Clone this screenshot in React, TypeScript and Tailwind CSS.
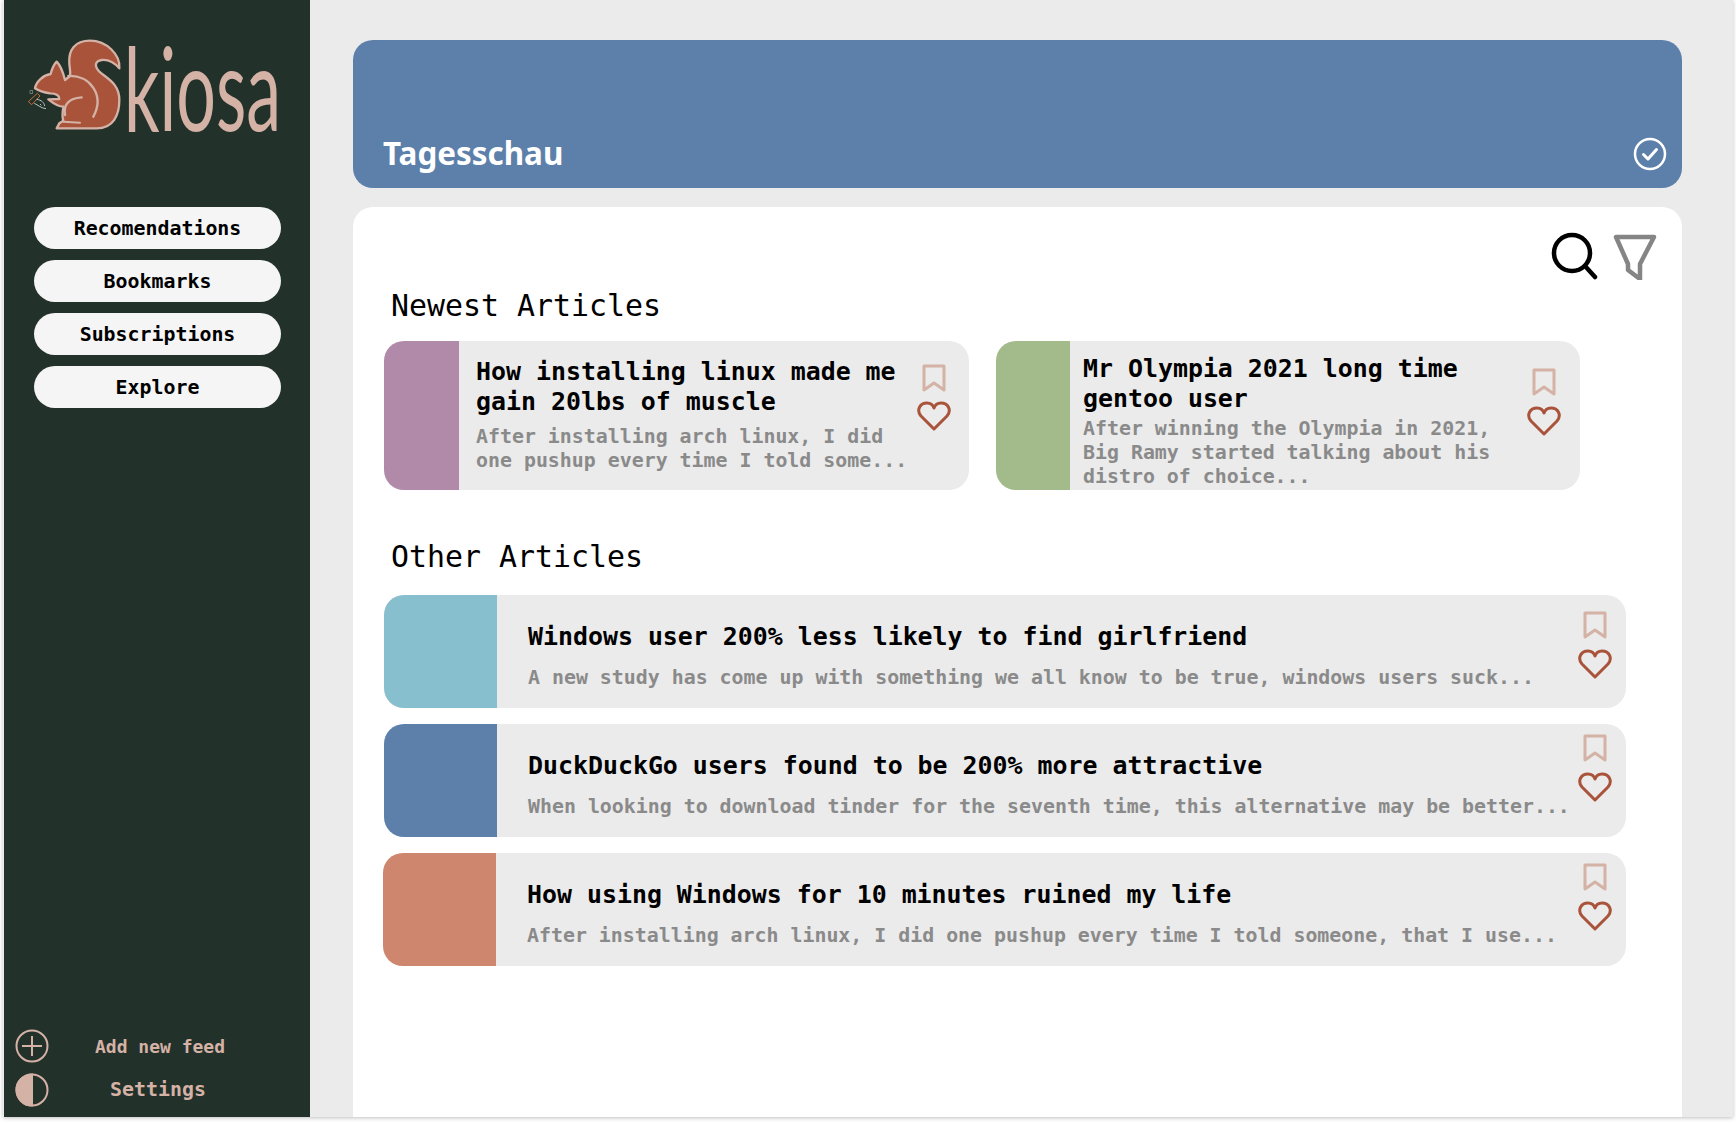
const mono = "font-['DejaVu_Sans_Mono','Liberation_Mono',monospace]";

function Logo() {
  return (
    <svg viewBox="12 0 918 600" className="w-[306px] h-[200px] shrink-0">
      <path
        d="M170 385 L290 385 C340 385 358 345 358 300 C358 250 320 235 298 215 C282 198 285 183 305 180 C325 178 345 190 358 205 C362 165 320 122 270 122 C225 122 205 150 208 190 C209 205 212 218 210 228 L195 240 C190 220 180 195 170 185 C160 195 155 210 152 222 C130 225 108 245 105 265 C120 275 135 278 150 280 C165 280 178 285 178 297 L145 298 C160 310 175 320 190 320 C188 335 185 350 190 362 L178 370 Z"
        fill="#a9533b"
        stroke="#d4b2a5"
        strokeWidth="7"
        strokeLinejoin="round"
      />
      <path d="M205 228 C270 225 315 285 280 350" fill="none" stroke="#d4b2a5" strokeWidth="7" strokeLinecap="round" />
      <path d="M195 345 C190 315 205 295 245 292" fill="none" stroke="#d4b2a5" strokeWidth="7" strokeLinecap="round" />
      <path d="M190 365 L240 368" fill="none" stroke="#d4b2a5" strokeWidth="6" strokeLinecap="round" />
      <path d="M85 305 L112 280 L120 288 L95 314 Z" fill="none" stroke="#c5713a" strokeWidth="3" strokeLinejoin="round" />
      <path d="M110 298 C125 300 132 308 134 318 M103 310 C113 315 125 325 138 326 M120 312 L124 316" fill="none" stroke="#b9c4bc" strokeWidth="3" />
      <rect x="90" y="272" width="8" height="8" fill="none" stroke="#8d9a92" strokeWidth="2" />
      <text
        transform="translate(372 392) scale(0.6 1)"
        fontFamily="Lato, 'Noto Sans', sans-serif"
        fontSize="350"
        fill="#d4b2a5"
      >
        kiosa
      </text>
    </svg>
  );
}

function BookmarkIcon() {
  return (
    <svg width="26" height="30" viewBox="0 0 26 30" fill="none" stroke="#d4b2a5" strokeWidth="3" strokeLinejoin="round">
      <path d="M3 3 H23 V27 L13 20 L3 27 Z" />
    </svg>
  );
}

function HeartIcon() {
  return (
    <svg width="34" height="32" viewBox="0 0 34 32" fill="none" stroke="#a9533b" strokeWidth="3" strokeLinejoin="round">
      <path d="M17 29 L4 16 C-1 10 3 3 10 3 C13 3 16 5 17 8 C18 5 21 3 24 3 C31 3 35 10 30 16 Z" />
    </svg>
  );
}

function NewCard({
  color,
  swatch,
  title,
  desc,
  className,
  textClass,
  descClass,
  iconClass,
}: {
  color: string;
  swatch: string;
  title: string[];
  desc: string[];
  className: string;
  textClass: string;
  descClass: string;
  iconClass: string;
}) {
  return (
    <div className={`flex h-[149px] bg-[#ebebeb] rounded-[20px] overflow-hidden ${className}`}>
      <div className={`${swatch} shrink-0 ${color}`} />
      <div className={`flex-1 min-w-0 ${textClass}`}>
        <div className="text-[24.9px] leading-[30px] font-bold text-black whitespace-nowrap">
          {title.map((t) => (
            <div key={t}>{t}</div>
          ))}
        </div>
        <div className={`text-[19.9px] leading-[24px] font-bold text-[#8a8a8a] whitespace-nowrap ${descClass}`}>
          {desc.map((d) => (
            <div key={d}>{d}</div>
          ))}
        </div>
      </div>
      <div className={`flex flex-col items-center shrink-0 ${iconClass}`}>
        <BookmarkIcon />
        <HeartIcon />
      </div>
    </div>
  );
}

function ArticleRow({
  color,
  title,
  desc,
  iconTop,
  className = "",
}: {
  color: string;
  title: string;
  desc: string;
  iconTop: string;
  className?: string;
}) {
  return (
    <div className={`flex h-[113px] bg-[#ebebeb] rounded-[20px] overflow-hidden ${className}`}>
      <div className={`w-[113px] shrink-0 ${color}`} />
      <div className="flex-1 min-w-0 pl-[31px] pt-[27px]">
        <div className="text-[24.9px] leading-[30px] font-bold text-black whitespace-nowrap">{title}</div>
        <div className="mt-[14px] text-[19.9px] leading-[24px] font-bold text-[#8a8a8a] whitespace-nowrap">{desc}</div>
      </div>
      <div className={`w-[62px] shrink-0 flex flex-col items-center gap-[8px] ${iconTop}`}>
        <BookmarkIcon />
        <HeartIcon />
      </div>
    </div>
  );
}

export default function App() {
  return (
    <div className={`w-[1736px] h-[1125px] bg-white overflow-hidden ${mono}`}>
      <div className="mx-[3px] pl-px w-[1730px] h-[1117px] bg-[#ebebeb] flex shadow-[0_1px_4px_rgba(0,0,0,0.25)]">
        <aside className="w-[306px] shrink-0 h-full bg-[#23312b] flex flex-col">
          <Logo />
          <nav className="mt-[7px] pl-[30px] pr-[29px] flex flex-col gap-[11px]">
            {["Recomendations", "Bookmarks", "Subscriptions", "Explore"].map((item) => (
              <div
                key={item}
                className="h-[42px] pt-[2px] rounded-full bg-[#f5f5f5] text-black text-[19.9px] font-bold flex items-center justify-center"
              >
                {item}
              </div>
            ))}
          </nav>
          <div className="mt-auto pb-[10px] flex flex-col gap-[10px] text-[#d4b2a5] font-bold">
            <div className="flex items-center pl-[11px] pr-[39px]">
              <svg width="34" height="34" viewBox="0 0 34 34" fill="none" stroke="#d4b2a5" strokeWidth="2">
                <circle cx="17" cy="17" r="15.5" />
                <path d="M17 7 V27 M7 17 H27" />
              </svg>
              <span className="flex-1 text-center text-[18px]">Add new feed</span>
            </div>
            <div className="flex items-center pl-[11px] pr-[43px]">
              <svg width="34" height="34" viewBox="0 0 34 34" fill="none" stroke="#d4b2a5" strokeWidth="2">
                <circle cx="17" cy="17" r="15.5" />
                <path d="M17 1.5 A15.5 15.5 0 0 0 17 32.5 Z" fill="#d4b2a5" />
              </svg>
              <span className="flex-1 text-center text-[19.9px]">Settings</span>
            </div>
          </div>
        </aside>
        <main className="flex-1 min-w-0 pt-[40px] pl-[43px] pr-[51px] flex flex-col">
          <header className="h-[148px] shrink-0 bg-[#5d80ab] rounded-[20px] flex items-end justify-between pl-[30px] pr-[15px] pb-[15px]">
            <span className="font-['Noto_Sans',sans-serif] font-bold text-[31.4px] leading-[40px] text-white">Tagesschau</span>
            <svg width="34" height="34" viewBox="0 0 34 34" fill="none" stroke="#ffffff" strokeWidth="2.5" className="mb-[2px]">
              <circle cx="17" cy="17" r="15" />
              <path d="M10.5 17.5 L15 22 L23.5 12.5" strokeWidth="3" strokeLinecap="round" strokeLinejoin="round" />
            </svg>
          </header>
          <section className="mt-[19px] flex-1 min-h-0 bg-white rounded-t-[20px] pt-[25px]">
            <div className="flex justify-end gap-[14px] pr-[24px]">
              <svg width="48" height="48" viewBox="0 0 48 48" fill="none" stroke="#000000" strokeWidth="4.5" strokeLinecap="round">
                <circle cx="22" cy="21" r="18" />
                <path d="M35 34 L45 45" />
              </svg>
              <svg width="46" height="48" viewBox="0 0 46 48" fill="none" stroke="#858585" strokeWidth="4.5" strokeLinejoin="round">
                <path d="M4 5 H42 L28 32 V47 L16 38 V32 Z" />
              </svg>
            </div>
            <h2 className="mt-[8px] pl-[38px] text-[29.9px] leading-[36px] font-normal text-black">Newest Articles</h2>
            <div className="mt-[17px] pl-[31px] flex gap-[27px]">
              <NewCard
                className="w-[585px]"
                color="bg-[#b28aa9]"
                swatch="w-[75px]"
                textClass="pl-[17px] pt-[16px]"
                descClass="mt-[8px]"
                iconClass="w-[70px] pt-[22px] gap-[7px]"
                title={["How installing linux made me", "gain 20lbs of muscle"]}
                desc={["After installing arch linux, I did", "one pushup every time I told some..."]}
              />
              <NewCard
                className="w-[584px]"
                color="bg-[#a3bb8a]"
                swatch="w-[74px]"
                textClass="pl-[13px] pt-[13px]"
                descClass="mt-[3px]"
                iconClass="w-[72px] pt-[26px] gap-[8px]"
                title={["Mr Olympia 2021 long time", "gentoo user"]}
                desc={["After winning the Olympia in 2021,", "Big Ramy started talking about his", "distro of choice..."]}
              />
            </div>
            <h2 className="mt-[49px] pl-[38px] text-[29.9px] leading-[36px] font-normal text-black">Other Articles</h2>
            <div className="mt-[20px] pl-[31px] pr-[56px] flex flex-col gap-[16px]">
              <ArticleRow
                color="bg-[#88bfce]"
                iconTop="pt-[15px]"
                title="Windows user 200% less likely to find girlfriend"
                desc="A new study has come up with something we all know to be true, windows users suck..."
              />
              <ArticleRow
                color="bg-[#5d80ab]"
                iconTop="pt-[9px]"
                title="DuckDuckGo users found to be 200% more attractive"
                desc="When looking to download tinder for the seventh time, this alternative may be better..."
              />
              <ArticleRow
                className="-ml-px"
                color="bg-[#cf866e]"
                iconTop="pt-[9px]"
                title="How using Windows for 10 minutes ruined my life"
                desc="After installing arch linux, I did one pushup every time I told someone, that I use..."
              />
            </div>
          </section>
        </main>
      </div>
    </div>
  );
}
